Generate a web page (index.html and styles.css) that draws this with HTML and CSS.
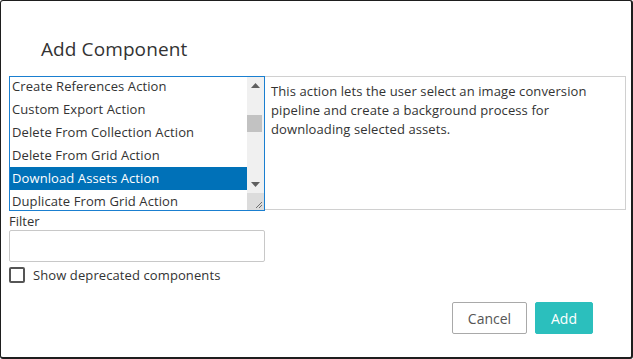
FILE: index.html
```
<!DOCTYPE html>
<html>
<head>
<meta charset="utf-8">
<link rel="stylesheet" href="styles.css">
</head>
<body>
<div class="dialog">
  <h1 class="title">Add Component</h1>
  <div class="content">
    <div class="pickrow">
      <div class="listbox">
        <div class="items">
          <div class="item">Create References Action</div>
          <div class="item">Custom Export Action</div>
          <div class="item">Delete From Collection Action</div>
          <div class="item">Delete From Grid Action</div>
          <div class="item selected">Download Assets Action</div>
          <div class="item">Duplicate From Grid Action</div>
        </div>
        <div class="scrollbar">
          <div class="arrow up"><svg width="9" height="5" viewBox="0 0 9 5"><path d="M0 5 L4.5 0 L9 5 Z" fill="#606060"/></svg></div>
          <div class="track">
            <div class="thumb-gap"></div>
            <div class="thumb"></div>
          </div>
          <div class="arrow down"><svg width="9" height="5" viewBox="0 0 9 5"><path d="M0 0 L4.5 5 L9 0 Z" fill="#606060"/></svg></div>
          <div class="grip"><svg width="17" height="17" viewBox="0 0 17 17"><path d="M15 9 L9 15 M15 12 L12 15" stroke="#707070" stroke-width="1" fill="none"/></svg></div>
        </div>
      </div>
      <div class="description">This action lets the user select an image conversion pipeline and create a background process for downloading selected assets.</div>
    </div>
    <label class="filter-label">Filter</label>
    <input class="filter-input" type="text">
    <div class="check-row">
      <span class="checkbox"></span>
      <span class="check-label">Show deprecated components</span>
    </div>
  </div>
  <div class="actions">
    <button class="btn btn-cancel">Cancel</button>
    <button class="btn btn-add">Add</button>
  </div>
</div>
</body>
</html>
```
FILE: styles.css
```
* { box-sizing: border-box; }
html, body { margin: 0; padding: 0; background: #fff; }
body {
  font-family: "Open Sans", "Noto Sans", sans-serif;
  font-size: 13px;
  color: #333;
}
.dialog {
  width: 633px;
  height: 359px;
  border-style: solid;
  border-color: #1e1e1e;
  border-width: 1px 2px 2px 1px;
  border-radius: 3px;
  background: #fff;
}
.title {
  margin: 0;
  padding: 35px 0 0 40px;
  font-size: 19px;
  font-weight: 400;
  line-height: 26px;
  letter-spacing: 0.1px;
  color: #333;
  height: 75px;
}
.content {
  padding-left: 8px;
}
.pickrow {
  display: grid;
  grid-template-columns: 256px 361px;
  height: 135px;
}
.listbox {
  border: 1px solid #1a7fd0;
  display: flex;
  overflow: hidden;
  height: 135px;
}
.items {
  flex: 1;
  overflow: hidden;
  padding-top: 0;
  margin-top: -2px;
}
.item {
  height: 23px;
  line-height: 23px;
  padding-left: 2px;
  white-space: nowrap;
  letter-spacing: 0.1px;
  color: #333;
}
.item.selected {
  background: #0071b8;
  color: #fff;
}
.scrollbar {
  width: 17px;
  background: #f0f0f0;
  display: flex;
  flex-direction: column;
}
.arrow {
  height: 17px;
  display: flex;
  align-items: center;
  justify-content: center;
}
.track {
  flex: 1;
  padding: 0 2px 0 0;
}
.thumb-gap { height: 21px; }
.thumb {
  height: 17px;
  background: #c2c2c2;
}
.grip {
  height: 17px;
  background: #dcdcdc;
}
.grip svg { display: block; }
.description {
  border: 1px solid #d0d0d0;
  border-left: none;
  padding: 5px 5px 0 6px;
  line-height: 19px;
  letter-spacing: 0.1px;
  color: #333;
  height: 134px;
}
.filter-label {
  display: block;
  line-height: 18px;
  padding-top: 1px;
  height: 19px;
}
.filter-input {
  display: block;
  width: 256px;
  height: 32px;
  border: 1px solid #c8c8c8;
  border-radius: 2px;
  margin: 0;
  font: inherit;
  padding: 0 6px;
}
.check-row {
  display: flex;
  align-items: center;
  margin-top: 4px;
  height: 17px;
}
.checkbox {
  width: 16px;
  height: 16px;
  border: 2px solid #555;
  border-radius: 2px;
  margin-right: 8px;
}
.check-label { color: #333; letter-spacing: 0.1px; }
.actions {
  display: flex;
  justify-content: flex-end;
  gap: 8px;
  padding-right: 38px;
  margin-top: 19px;
}
.btn {
  height: 32px;
  font: inherit;
  font-size: 14px;
  border-radius: 2px;
  margin: 0;
  padding: 0;
}
.btn-cancel {
  width: 75px;
  background: #fff;
  border: 1px solid #a9a9a9;
  color: #555;
}
.btn-add {
  width: 58px;
  background: #2bbfbd;
  border: 1px solid #2bbfbd;
  color: #fff;
}
```
